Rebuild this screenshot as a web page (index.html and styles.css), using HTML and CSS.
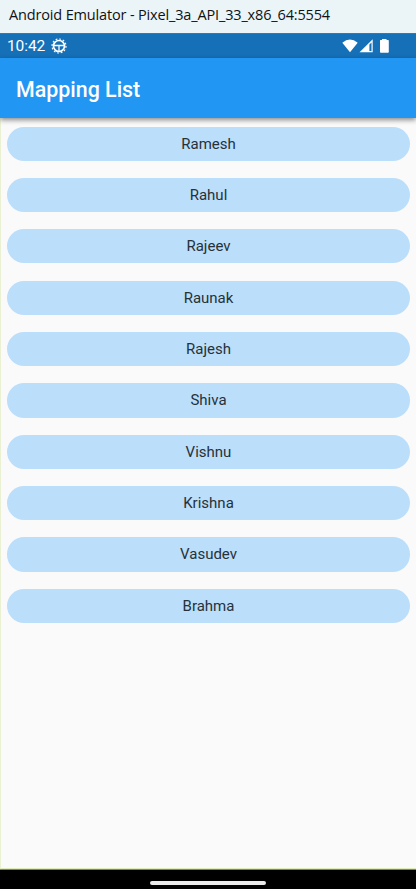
FILE: index.html
```html
<!DOCTYPE html>
<html lang="en">
<head>
<meta charset="utf-8">
<title>Mapping List</title>
<link rel="stylesheet" href="styles.css">
</head>
<body>
<div class="window">
  <div class="titlebar">Android Emulator - Pixel_3a_API_33_x86_64:5554</div>
  <div class="screen">
    <div class="status">
      <span class="time">10:42</span>
      <svg class="gear" viewBox="0 0 16 16"><circle cx="8" cy="8" r="5.5" fill="none" stroke="#fff" stroke-width="1.7"/><circle cx="8" cy="8" r="7" fill="none" stroke="#fff" stroke-width="1.2" stroke-dasharray="1.8 1.865"/><path d="M3 7.500H13M8 8V13" stroke="#fff" stroke-width="1.3"/></svg>
      <svg class="signals" viewBox="0 0 50 16"><path d="M.3 4.800Q8-2 15.700 4.800L8 14.300Z" fill="#fff"/><path d="M17.500 14.300L30.700 1.200V14.300Z" fill="#fff"/><path d="M27.400 6.500L29.500 4.500V13h-2.100Z" fill="#1570b8"/><path d="M38 2.500q0-.5.5-.5H40V1h4.500v1H46q.8 0 .8.500V14q0 .8-.8.800h-7.200q-.8 0-.8-.8Z" fill="#fff"/></svg>
    </div>
    <header class="appbar"><h1>Mapping List</h1></header>
    <main class="list">
      <div class="item">Ramesh</div>
      <div class="item">Rahul</div>
      <div class="item">Rajeev</div>
      <div class="item">Raunak</div>
      <div class="item">Rajesh</div>
      <div class="item">Shiva</div>
      <div class="item">Vishnu</div>
      <div class="item">Krishna</div>
      <div class="item">Vasudev</div>
      <div class="item">Brahma</div>
    </main>
  </div>
  <div class="navbar"><div class="handle"></div></div>
</div>
</body>
</html>
```

FILE: styles.css
```css
* { box-sizing: border-box; }
body { margin: 0; background: #000; font-family: Roboto, sans-serif; }
.window { display: flex; flex-direction: column; width: 416px; height: 889px; }
.titlebar { height: 33px; padding-left: 9px; background: #ebf5f8; color: #111; font: 14.5px/29px "Open Sans", sans-serif; letter-spacing: -.155px; white-space: nowrap; }
.screen { display: flex; flex-direction: column; height: 836px; background: #fafafa; border-left: 1px solid #e9f1d2; border-bottom: 1px solid #dcebb8; }
.status { display: flex; align-items: center; flex: none; height: 25px; padding: 0 24px 0 7px; margin-left: -1px; border-top: 1px solid #3d7f72; background: #1570b8; color: #fff; }
.time { font-size: 15.5px; letter-spacing: -.1px; }
.gear { width: 16px; height: 16px; margin-left: 6px; }
.signals { width: 50px; height: 16px; margin-left: auto; }
.appbar { display: flex; align-items: center; flex: none; height: 60px; padding: 4px 0 0 16px; margin-left: -1px; background: #2196f3; color: #fff; box-shadow: 0 2px 5px rgba(0,0,0,.45); }
h1 { margin: 0; font-size: 21.4px; font-weight: 500; line-height: 1; }
.list { display: flex; flex-direction: column; gap: 17.05px; padding: 8.500px 6px 0; }
.item { height: 34.3px; border-radius: 17.15px; background: #bbdefb; color: #263238; font-size: 15px; line-height: 34.3px; text-align: center; }
.navbar { display: flex; justify-content: center; height: 20px; padding-top: 10.500px; border-top: 1px solid #6f9a22; background: #000; }
.handle { width: 116px; height: 4.500px; border-radius: 2px; background: #ebebeb; }
```
